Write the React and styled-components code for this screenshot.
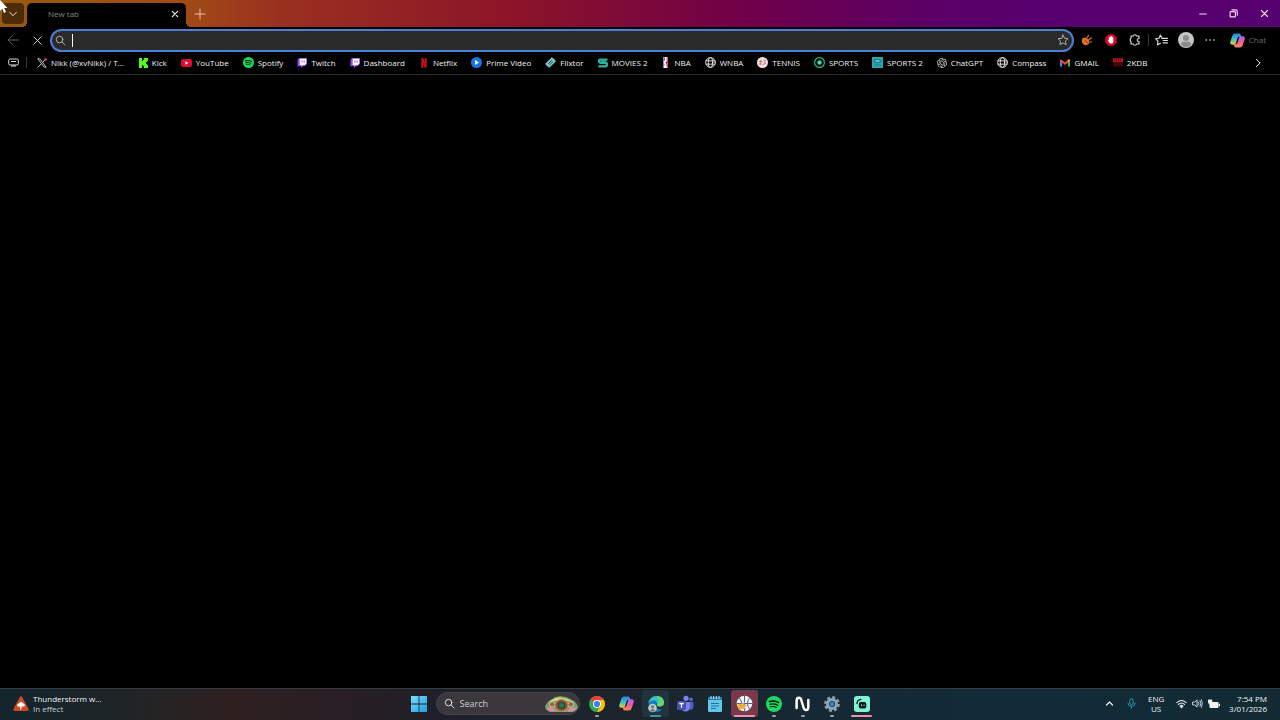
import styled, { createGlobalStyle, css } from "styled-components"
import { SiNetflix, SiOpenai } from "react-icons/si"

const GlobalStyle = createGlobalStyle`
  * { box-sizing: border-box; }
  body {
    margin: 0;
    background: #000;
    color: #e6e6e6;
    font-family: "Open Sans", "Noto Sans", sans-serif;
    font-size: 8px;
    line-height: 10px;
  }
  button {
    border: 0;
    padding: 0;
    background: none;
    color: inherit;
    font: inherit;
  }
  svg { display: block; flex: none; }
`

const Desktop = styled.div`
  display: flex;
  flex-direction: column;
  min-height: 100vh;
`

/* title bar */

const TitleBar = styled.header`
  display: flex;
  height: 27px;
  padding: 3px 0 0 2px;
  background: linear-gradient(90deg, #985a0c 0%, #a04c14 14%, #9a3020 22%, #8c1428 40%, #700048 58%, #5c0066 72%, #560070 84%);
`

const TabSearch = styled.button`
  display: grid;
  place-items: center;
  width: 22px;
  height: 21px;
  border-radius: 4px;
  background: #4c2c06;
  color: #f0e4d8;
`

const Tab = styled.div`
  position: relative;
  display: flex;
  align-items: center;
  justify-content: space-between;
  width: 159px;
  margin-left: 3px;
  padding: 0 4px 3px 21px;
  border-radius: 5px 5px 0 0;
  background: #000;
  color: #858585;

  &::before,
  &::after {
    content: "";
    position: absolute;
    bottom: 0;
    width: 5px;
    height: 5px;
  }
  &::before {
    right: 100%;
    background: radial-gradient(circle at 0 0, transparent 5px, #000 5px);
  }
  &::after {
    left: 100%;
    background: radial-gradient(circle at 100% 0, transparent 5px, #000 5px);
  }
`

const SmallButton = styled.button`
  display: grid;
  place-items: center;
  width: 14px;
  height: 14px;
  color: #f0f0f0;
`

const NewTab = styled.button`
  display: grid;
  place-items: center;
  width: 20px;
  height: 21px;
  margin-left: 4px;
  color: #f0bfae;
`

const WindowControls = styled.div`
  display: flex;
  margin-left: auto;
`

const WindowButton = styled.button`
  display: grid;
  place-items: center;
  width: 31px;
  height: 21px;
  color: #f4d8fa;
`

const Pointer = styled.svg`
  position: absolute;
  top: 0;
  left: 0;
  z-index: 2;
`

/* toolbar */

const Toolbar = styled.div`
  display: flex;
  align-items: center;
  height: 26px;
  padding-left: 1px;
`

const ToolButton = styled.button`
  display: grid;
  place-items: center;
  width: 24px;
  height: 24px;
  color: ${p => (p.$dim ? "#5c5c5c" : "#e0e0e0")};
`

const AddressBar = styled.label`
  display: flex;
  flex: 1;
  align-items: center;
  height: 23px;
  margin: 0 1px;
  padding: 0 3px;
  border: 2px solid #4a7fd4;
  border-radius: 12px;
  background: #2a2a2a;
  color: #b8b8b8;
`

const Caret = styled.span`
  width: 1px;
  height: 13px;
  margin-left: 6px;
  background: #fff;
`

const AddressInput = styled.input`
  flex: 1;
  min-width: 0;
  border: 0;
  outline: 0;
  background: none;
  color: #fff;
  font: inherit;
  caret-color: transparent;
`

const Divider = styled.span`
  width: 1px;
  height: ${p => p.$height}px;
  margin: 0 1px;
  background: #3a3a3a;
`

const ChatButton = styled.button`
  display: flex;
  align-items: center;
  gap: 4px;
  padding: 0 14px 0 8px;
  color: #6c6c6c;
`

/* bookmarks */

const Bookmarks = styled.nav`
  display: flex;
  align-items: center;
  height: 22px;
  padding: 0 15px 2px 1px;
  border-bottom: 1px solid #2b2b2b;
`

const BookmarkList = styled.ul`
  display: flex;
  flex: 1;
  align-items: center;
  gap: 14px;
  margin: 0;
  padding: 0 0 0 9px;
  list-style: none;
`

const Bookmark = styled.a`
  display: flex;
  align-items: center;
  gap: 4px;
  height: 12px;
  color: #f0f0f0;
  font-weight: 500;
  text-decoration: none;
  white-space: nowrap;
`

const Page = styled.main`
  flex: 1;
  background: #000;
`

/* taskbar */

const Taskbar = styled.footer`
  display: grid;
  grid-template-columns: 1fr auto 1fr;
  align-items: center;
  height: 32px;
  padding-bottom: 2px;
  border-top: 1px solid #343d41;
  background: linear-gradient(90deg, #13252d 0%, #1e2426 9%, #2f2020 18%, #281e24 27%, #1f2029 34%, #1c242c 50%, #152833 62%, #122b38 80%, #132a33 100%);
`

const Weather = styled.button`
  display: flex;
  align-items: center;
  gap: 4px;
  padding-left: 13px;
  color: #eef2f3;
  text-align: left;
`

const Muted = styled.span`
  display: block;
  color: #c4cccf;
`

const Tasks = styled.div`
  display: flex;
  align-items: center;
  gap: 3px;
  padding-left: 2px;
`

const SearchBox = styled.label`
  display: flex;
  align-items: center;
  width: 144px;
  height: 23px;
  padding: 0 0 0 7px;
  border: 1px solid #46444a;
  border-radius: 12px;
  background: #3a383d;
  color: #e2e2e2;
`

const SearchInput = styled.input`
  flex: 1;
  min-width: 0;
  padding: 0 0 0 5px;
  border: 0;
  outline: 0;
  background: none;
  color: #fff;
  font: inherit;
  font-size: 9px;
  &::placeholder { color: #cfcfcf; opacity: 1; }
`

const Apps = styled.div`
  display: grid;
  grid-template-columns: repeat(10, 1fr);
  justify-items: center;
  width: 294px;
`

const marks = {
  dot: css`width: 4px; background: #9aa3a8;`,
  short: css`width: 11px; background: #3f8fa3;`,
  long: css`width: 21px; background: #ef8fa8;`,
}

const AppButton = styled.button`
  position: relative;
  display: grid;
  place-items: center;
  width: 27px;
  height: 27px;
  border-radius: 3px;
  background: ${p => p.$bg || "none"};

  ${p => p.$mark && css`
    &::after {
      content: "";
      position: absolute;
      bottom: 0;
      height: 2px;
      border-radius: 1px;
      ${marks[p.$mark]}
    }
  `}
`

const Tray = styled.div`
  display: flex;
  align-items: center;
  justify-content: flex-end;
  padding-right: 13px;
  color: #eef2f3;
`

const TrayButton = styled.button`
  display: flex;
  align-items: center;
  justify-content: center;
  gap: 5px;
  min-width: 22px;
  height: 26px;
`

const Language = styled(TrayButton)`
  width: 28px;
  margin-right: 6px;
  text-align: center;
`

const Clock = styled(TrayButton)`
  margin-left: 9px;
  justify-content: flex-end;
  text-align: right;
`

/* icons */

const Line = ({ d, size = 12, w = 1, children, ...rest }) => (
  <svg width={size} height={size} viewBox="0 0 12 12" fill="none" stroke="currentColor" strokeWidth={w} strokeLinecap="round" strokeLinejoin="round" aria-hidden="true" {...rest}>
    {d && <path d={d} />}
    {children}
  </svg>
)

const star = "M6 1l1.5 3.3 3.5.4-2.6 2.4.7 3.6L6 8.9l-3.1 1.8.7-3.6L1 4.7l3.5-.4z"

const Search = ({ size }) => (
  <Line size={size}><circle cx="5" cy="5" r="3.6" /><path d="M7.7 7.7L11 11" /></Line>
)

const Spotify = ({ size }) => (
  <svg width={size} height={size} viewBox="0 0 16 16" fill="none" stroke="#06170b" strokeLinecap="round">
    <circle cx="8" cy="8" r="8" fill="#1ed760" stroke="none" />
    <path d="M3.6 5.6c3-.9 6.3-.6 8.9.9" strokeWidth="1.6" />
    <path d="M4.1 8.3c2.6-.7 5.2-.4 7.5.9" strokeWidth="1.3" />
    <path d="M4.6 10.8c2.2-.5 4.2-.2 6 .8" strokeWidth="1.1" />
  </svg>
)

const XLogo = () => (
  <svg width="10" height="10" viewBox="0 0 10 10" fill="none" stroke="#c4c4c4">
    <path d="M.8.8h2l6.400 8.400h-2z" />
    <path d="M9 .6L5.700 4.300M4.300 5.700L.8 9.400" />
    <circle cx="8.600" cy="1.600" r="1.400" fill="#d8345c" stroke="none" />
  </svg>
)

const Kick = () => (
  <svg width="10" height="10" viewBox="0 0 10 10" fill="#53fc18">
    <path d="M1 0h3v3h1V2h1V0h4v3H9v1H8v2h1v1h1v3H6V8H5V7H4v3H1z" />
  </svg>
)

const Youtube = () => (
  <svg width="11" height="10" viewBox="0 0 11 10">
    <rect y="1" width="11" height="8" rx="2" fill="#e3092f" />
    <path d="M4.3 3.2v3.6L7.5 5z" fill="#fff" />
  </svg>
)

const Twitch = () => (
  <svg width="10" height="10" viewBox="0 0 10 10">
    <path d="M2 0h8v6L7.5 8.3H5.8L4 10V8.3H.5V2z" fill="#9146ff" />
    <path d="M2.700.8h6.500v4.800L7.800 7H6L4.600 8.200V7H2.700z" fill="#fff" />
    <path d="M5 2.600v2M7.200 2.600v2" stroke="#9146ff" />
  </svg>
)

const Prime = () => (
  <svg width="11" height="11" viewBox="0 0 11 11">
    <circle cx="5.5" cy="5.5" r="5.5" fill="#1876e0" />
    <path d="M4 3v5l4-2.500z" fill="#fff" />
  </svg>
)

const Flixtor = () => (
  <svg width="11" height="11" viewBox="0 0 11 11">
    <path d="M0 7L6.800.3l1.400 1.200 1.100.1.200 1.200L11 4.200 4.300 10.700 3 9.600 1.700 9.400 1.500 8.200z" fill="#7fc4c4" />
    <path d="M3.200 6.800l3.600-3.500M4.500 8l3.600-3.500" stroke="#16494f" />
  </svg>
)

const Movies = () => (
  <svg width="10" height="10" viewBox="0 0 10 10" fill="none">
    <path d="M9.5 1.600H2.500Q1 1.600 1 3t1.500 1.700h5Q9 4.800 9 6.500T7.500 8.400H.5" stroke="#2bb3a3" strokeWidth="2.400" />
    <path d="M3 3.200h5" stroke="#8be0d4" strokeWidth=".6" />
  </svg>
)

const Nba = () => (
  <svg width="9" height="11" viewBox="0 0 9 11">
    <rect x="2" width="5" height="11" rx="1.2" fill="#fff" />
    <path d="M2.300 1.200Q2.500.3 4 .3L3.800 3 2.700 5l.8 2.500-.8 3-.4-.5z" fill="#2f58b5" />
    <path d="M5.500.3q1.300 0 1.300 1V10q0 .6-1 .6L5.300 7l-.8-1.500L5.800 4z" fill="#d3203f" />
  </svg>
)

const Globe = () => (
  <Line size={11}><circle cx="6" cy="6" r="5.3" /><ellipse cx="6" cy="6" rx="2.4" ry="5.3" /><path d="M1.200 4.200h9.600M1.200 7.800h9.600" /></Line>
)

const Tennis = () => (
  <svg width="11" height="11" viewBox="0 0 11 11" fill="none">
    <circle cx="5.5" cy="5.5" r="5.5" fill="#f2e4e2" />
    <path d="M2 4.500h3.500M6.500 3.200H9M2 7h2.500M5.500 7.500L9 6.500M4 2.500l-.5 5M7 5.200h2" stroke="#b66a68" strokeWidth=".9" />
  </svg>
)

const Sports = () => (
  <svg width="11" height="11" viewBox="0 0 11 11" fill="none" stroke="#20b98c">
    <circle cx="5.5" cy="5.5" r="4.9" strokeWidth="1.2" />
    <circle cx="5.5" cy="5.5" r="2.3" fill="#3fe0b0" stroke="#0b5c47" />
  </svg>
)

const Sports2 = () => (
  <svg width="11" height="11" viewBox="0 0 11 11" fill="none">
    <rect width="11" height="11" fill="#2aa5ab" />
    <path d="M2.500 2.500h6v3h-6zM2 8.500q3.500-2 7 0" stroke="#17808a" />
    <path d="M4 4h3" stroke="#8fe0e0" />
  </svg>
)

const Gmail = () => (
  <svg width="10" height="10" viewBox="0 0 10 10">
    <path d="M0 2v6.500h2.200V4z" fill="#4285f4" />
    <path d="M10 2v6.500H7.800V4z" fill="#34a853" />
    <path d="M0 2q.5-1 1.700-.3L5 4.200l3.300-2.500Q9.500 1 10 2v1.200L5 7 0 3.200z" fill="#ea4335" />
    <path d="M7.800 2l.8-.4Q10 1.300 10 2.800L7.800 4.700z" fill="#fbbc04" />
  </svg>
)

const Kdb = () => (
  <svg width="10" height="9" viewBox="0 0 11 9">
    <rect width="11" height="9" fill="#3a0809" />
    <path d="M0 0h11v4H0z" fill="#c3161c" />
    <path d="M2 1v2M4 1v2M6 1v2M8 1v2M1 6h9" stroke="#5c0c10" />
  </svg>
)

const Copilot = ({ size }) => (
  <svg width={size} height={size} viewBox="0 0 16 16">
    <defs>
      <linearGradient id="cpA" x1="0" y1="0" x2="0" y2="1">
        <stop offset="0" stopColor="#2f7df0" /><stop offset=".5" stopColor="#35c3c0" /><stop offset="1" stopColor="#f0c93a" />
      </linearGradient>
      <linearGradient id="cpB" x1="0" y1="0" x2="0" y2="1">
        <stop offset="0" stopColor="#a667f2" /><stop offset=".5" stopColor="#ee5aa0" /><stop offset="1" stopColor="#f98b4c" />
      </linearGradient>
    </defs>
    <path d="M5.500.5h4q1.500 0 2 1.500l.6 2H10Q8.500 4 8 5.500l-1.600 5.500Q5.900 12.500 4.500 12.500h-2Q-.4 12.500.3 9.500L2.500 3Q3.300.5 5.500.5z" fill="url(#cpA)" />
    <path d="M10.500 15.500h-4q-1.500 0-2-1.500l-.6-2H6q1.500 0 2-1.500L9.600 5Q10.100 3.500 11.500 3.500h2q2.900 0 2.200 3L13.500 13q-.8 2.500-3 2.500z" fill="url(#cpB)" />
  </svg>
)

const Collections = () => (
  <svg width="11" height="9" viewBox="0 0 11 9" fill="none" stroke="#e0e0e0">
    <rect x=".7" y="1" width="9.6" height="6" rx="1.5" />
    <path d="M3 3.500h5M3 8h5" />
  </svg>
)

const PlugIcon = () => (
  <svg width="12" height="12" viewBox="0 0 12 12" fill="none" stroke="#ea7028" strokeLinecap="round">
    <path d="M2 4.500Q4 3 6.500 5.200T7.500 9.700Q4.500 12 2.300 9.700T2 4.500z" fill="#ea7028" />
    <path d="M5.800 4L7.500 1.500M7.500 6L10.500 3.800M9 8h1.500" strokeWidth="1.2" />
    <path d="M4 6.500l2.500 2.300" stroke="#7a3208" />
  </svg>
)

const Blocker = () => (
  <svg width="12" height="12" viewBox="0 0 12 12">
    <path d="M3.600.3h4.800l3.300 3.300v4.800l-3.300 3.300H3.600L.3 8.400V3.600z" fill="#d9062c" />
    <path d="M3.800 6V3.500h.9V2.600h1v-.5h1v.7h1v.8h.7V7.500Q8.200 9.800 6 9.800 4.600 9.800 3 6.700z" fill="#fff" />
  </svg>
)

const Avatar = () => (
  <svg width="16" height="16" viewBox="0 0 16 16">
    <circle cx="8" cy="8" r="8" fill="#c6c6c6" />
    <circle cx="8" cy="6" r="3" fill="#8b8b8b" />
    <path d="M2.800 12.500Q3 9.700 5.500 9.700h5q2.500 0 2.700 2.800Q11 15 8 15t-5.200-2.500z" fill="#8b8b8b" />
  </svg>
)

const StormIcon = () => (
  <svg width="16" height="16" viewBox="0 0 16 16">
    <path d="M6.800 1.200q1.200-1.800 2.400 0l6.300 11.500q.8 2-1.200 2.300H1.700q-2-.3-1.200-2.300z" fill="#cc4a24" />
    <path d="M4.500 10.500q-1-2.700 1.700-3.200Q8 4.800 10 7.300q2.500.7 1.500 3.200z" fill="#fff" />
    <path d="M8.500 8.500L6.800 11h1.500l-.8 2.500" fill="none" stroke="#fff" />
  </svg>
)

const Windows = () => (
  <svg width="16" height="16" viewBox="0 0 16 16">
    <defs>
      <linearGradient id="win" x1="0" y1="0" x2="1" y2="1">
        <stop stopColor="#7fdcfb" /><stop offset="1" stopColor="#1b9fe4" />
      </linearGradient>
    </defs>
    <path d="M0 0h7.600v7.600H0zM8.400 0H16v7.600H8.400zM0 8.400h7.600V16H0zM8.400 8.400H16V16H8.400z" fill="url(#win)" />
  </svg>
)

const Highlight = () => (
  <svg width="35" height="18" viewBox="0 0 36 20" preserveAspectRatio="none">
    <path d="M1 13Q3 7 8 5q4-4 10-3.500T28 5q5 2 7 8-1 5-6 6H7q-5-1-6-6z" fill="#7fa06c" />
    <path d="M5 8q6-6 13-5t13 5q-5-2-13-2T5 8z" fill="#c8d98c" />
    <path d="M3 15q5-3 9 3H7q-3-1-4-3zM33 15q-5-3-9 3h5q3-1 4-3z" fill="#e889b4" />
    <circle cx="8.500" cy="10.500" r="3" fill="#8a6a4e" stroke="#d8c8a0" />
    <circle cx="27.500" cy="10.500" r="3" fill="#8a6a4e" stroke="#d8c8a0" />
    <circle cx="18" cy="11.500" r="6.500" fill="#8f4a30" stroke="#cf8a58" />
    <circle cx="18" cy="11.500" r="3.300" fill="#237a5c" stroke="#123c30" />
  </svg>
)

const Chrome = () => (
  <svg width="16" height="16" viewBox="0 0 16 16">
    <circle cx="8" cy="8" r="8" fill="#34a853" />
    <path d="M8 8L1.100 4A8 8 0 0 1 14.900 4H8z" fill="#ea4335" />
    <path d="M8 4h6.900A8 8 0 0 1 8 16l3.500-6z" fill="#fbbc04" />
    <circle cx="8" cy="8" r="4" fill="#fff" />
    <circle cx="8" cy="8" r="3.1" fill="#3b7fee" />
  </svg>
)

const Edge = () => (
  <svg width="18" height="18" viewBox="0 0 18 18">
    <path d="M1.500 9A7.700 7.700 0 0 1 9.500 1Q16 1 17 7q.3 4-4 4.500-3 0-3.500-1.500 1-3-2-4T1.500 9z" fill="#38c4b8" />
    <path d="M9.500 1Q16 1 17 7q.3 4-4 4.500-2.500 0-3.300-1.200Q15 6 9.500 1z" fill="#66d96c" />
    <path d="M1.500 9q2-4 6-3.500Q10 6 9.700 8.500 7.500 11 10 13.500q3 1.500 5.500.5Q13 17 9 17 2 16 1.500 9z" fill="#1677cb" />
    <circle cx="5.500" cy="13" r="4.300" fill="#bfc7ca" />
    <circle cx="5.500" cy="11.800" r="1.600" fill="#69757b" />
    <path d="M2.800 15.500q2.700-3.200 5.400 0-2.700 2.400-5.400 0z" fill="#69757b" />
  </svg>
)

const Teams = () => (
  <svg width="17" height="17" viewBox="0 0 17 17">
    <circle cx="9" cy="3.300" r="2.600" fill="#7b83eb" />
    <circle cx="14" cy="4.300" r="1.900" fill="#5b62c9" />
    <path d="M11 7h5.500v5q-.5 3-3.500 3z" fill="#5059c9" />
    <path d="M5 7h8v5.500q-.5 4-4.500 4T5 12.500z" fill="#7b83eb" />
    <rect y="6" width="9" height="9" rx="1.500" fill="#4450b8" />
    <path d="M2.300 8.500h4.400M4.500 8.500v4.300" stroke="#fff" strokeWidth="1.300" />
  </svg>
)

const Notepad = () => (
  <svg width="14" height="16" viewBox="0 0 14 16">
    <rect y="1" width="14" height="15" rx="1.500" fill="#62c7e8" />
    <path d="M0 2.500Q0 1 1.500 1h11Q14 1 14 2.500V4H0z" fill="#1d7fa8" />
    <path d="M3 0v3M5.700 0v3M8.300 0v3M11 0v3" stroke="#bceaf7" />
    <path d="M3 7.500h8M3 10h8M3 12.500h5" stroke="#20708f" />
  </svg>
)

const BallApp = () => (
  <svg width="17" height="17" viewBox="0 0 17 17" fill="none">
    <circle cx="8.500" cy="8.500" r="7.800" fill="#f2f3f6" />
    <path d="M8.500.7v15.600M.7 8.500h15.600M3.300 2.800q4.500 5.700 0 11.400M13.700 2.800q-4.500 5.700 0 11.400" stroke="#4a62a5" />
    <path d="M1 9.500l5-1 3-2-1 3 3 .5-2 2 1 2.500-4-1-3 2-.5-3z" fill="#efad3d" />
  </svg>
)

const NApp = () => (
  <svg width="15" height="16" viewBox="0 0 15 16" fill="none" stroke="#fff" strokeWidth="2.500" strokeLinecap="round">
    <path d="M1.600 12V5q0-3.200 2.300-3.200 1.700 0 2.400 2.200l2.200 7.500q.7 2.500 2.500 2.500 2.300 0 2.300-3V4" />
  </svg>
)

const Gear = () => (
  <svg width="16" height="16" viewBox="0 0 16 16">
    <circle cx="8" cy="8" r="6.600" fill="none" stroke="#8d9baa" strokeWidth="2.600" strokeDasharray="3.100 2.080" />
    <circle cx="8" cy="8" r="4.500" fill="#27323c" stroke="#93a2b2" strokeWidth="3" />
    <circle cx="8" cy="8" r="2.300" fill="#2c86c9" />
  </svg>
)

const Streamlabs = () => (
  <svg width="16" height="16" viewBox="0 0 16 16" fill="none">
    <rect width="16" height="16" rx="3" fill="#80f5d2" />
    <rect x="4.800" y="6" width="7.500" height="6.500" rx="2" fill="#09161d" />
    <path d="M3 7.500q0-3.700 4-4.200" stroke="#09161d" strokeWidth="1.300" strokeLinecap="round" />
    <path d="M7.500 8.500V10M10 8.500V10" stroke="#80f5d2" />
  </svg>
)

const bookmarks = [
  ["Nikk (@xvNikk) / T...", <XLogo />],
  ["Kick", <Kick />],
  ["YouTube", <Youtube />],
  ["Spotify", <Spotify size={11} />],
  ["Twitch", <Twitch />],
  ["Dashboard", <Twitch />],
  ["Netflix", <SiNetflix size={10} color="#c9101d" />],
  ["Prime Video", <Prime />],
  ["Flixtor", <Flixtor />],
  ["MOVIES 2", <Movies />],
  ["NBA", <Nba />],
  ["WNBA", <Globe />],
  ["TENNIS", <Tennis />],
  ["SPORTS", <Sports />],
  ["SPORTS 2", <Sports2 />],
  ["ChatGPT", <SiOpenai size={10} color="#d0d0d0" />],
  ["Compass", <Globe />],
  ["GMAIL", <Gmail />],
  ["2KDB", <Kdb />],
]

const apps = [
  { name: "Chrome", icon: <Chrome />, mark: "dot" },
  { name: "Copilot", icon: <Copilot size={15} /> },
  { name: "Edge", icon: <Edge />, mark: "short", bg: "#22333d" },
  { name: "Teams", icon: <Teams /> },
  { name: "Notepad", icon: <Notepad /> },
  { name: "Basketball", icon: <BallApp />, mark: "long", bg: "#783a49" },
  { name: "Spotify", icon: <Spotify size={16} />, mark: "dot" },
  { name: "N", icon: <NApp />, mark: "dot" },
  { name: "Settings", icon: <Gear />, mark: "dot" },
  { name: "Streamlabs", icon: <Streamlabs />, mark: "long" },
]

export default function App() {
  return (
    <Desktop>
      <GlobalStyle />
      <Pointer width="9" height="14" viewBox="0 0 9 14" aria-hidden="true">
        <path d="M0 0v11l2.300-2.200L4 13l2-.9-1.700-4h3.200z" fill="#fff" />
      </Pointer>

      <TitleBar>
        <TabSearch aria-label="Search tabs"><Line size={10} d="M2 4l4 4 4-4" w={1.2} /></TabSearch>
        <Tab>
          <span>New tab</span>
          <SmallButton aria-label="Close tab"><Line size={8} d="M2 2l8 8M10 2l-8 8" w={1.8} /></SmallButton>
        </Tab>
        <NewTab aria-label="New tab"><Line size={12} d="M6 1v10M1 6h10" /></NewTab>
        <WindowControls>
          <WindowButton aria-label="Minimize"><Line size={8} d="M1 6h10" w={1.5} /></WindowButton>
          <WindowButton aria-label="Restore">
            <Line size={9} w={1.5}><rect x="1.500" y="3.500" width="7" height="7" rx="1" /><path d="M4 1.200h5q2 0 2 2v5" /></Line>
          </WindowButton>
          <WindowButton aria-label="Close"><Line size={9} d="M2 2l8 8M10 2l-8 8" w={1.5} /></WindowButton>
        </WindowControls>
      </TitleBar>

      <Toolbar>
        <ToolButton $dim aria-label="Back"><Line d="M11.500 6H1M5.500 1.500L1 6l4.500 4.500" /></ToolButton>
        <ToolButton aria-label="Stop"><Line size={11} d="M2 2l8 8M10 2l-8 8" /></ToolButton>
        <AddressBar>
          <Search size={11} />
          <Caret />
          <AddressInput aria-label="Address" />
          <Line size={12} d={star} w={0.9} />
        </AddressBar>
        <ToolButton aria-label="Plug extension"><PlugIcon /></ToolButton>
        <ToolButton aria-label="Ad blocker"><Blocker /></ToolButton>
        <ToolButton aria-label="Extensions">
          <Line w={1.1} d="M2 2h2.500q.2-1.300 1.500-1.300T7.500 2H10v2.500q-1.800.2-1.800 1.500T10 7.500V10H7.500q-.2 1.300-1.500 1.300T4.500 10H2V7.700Q1.200 7.300 1.200 6T2 4.300z" />
        </ToolButton>
        <Divider $height={12} />
        <ToolButton aria-label="Favorites">
          <Line size={13} d="M9.500 4H6.400L5 1 3.600 4l-3 .4 2.200 2.100L2.200 10 5 8.500M7.500 6h4M7.500 8.200h4M8 4h3.500" />
        </ToolButton>
        <ToolButton aria-label="Profile"><Avatar /></ToolButton>
        <ToolButton aria-label="More"><Line size={10} d="M1.500 6h.1M6 6h.1M10.500 6h.1" w={2} /></ToolButton>
        <ChatButton><Copilot size={15} />Chat</ChatButton>
      </Toolbar>

      <Bookmarks aria-label="Favorites bar">
        <ToolButton aria-label="Workspaces"><Collections /></ToolButton>
        <Divider $height={11} />
        <BookmarkList>
          {bookmarks.map(([name, icon]) => (
            <li key={name}><Bookmark href="#">{icon}{name}</Bookmark></li>
          ))}
        </BookmarkList>
        <SmallButton aria-label="More favorites"><Line size={10} d="M4 1.500L8.500 6 4 10.500" w={1.2} /></SmallButton>
      </Bookmarks>

      <Page />

      <Taskbar>
        <Weather>
          <StormIcon />
          <span>Thunderstorm w...<Muted>In effect</Muted></span>
        </Weather>
        <Tasks>
          <AppButton aria-label="Start"><Windows /></AppButton>
          <SearchBox>
            <Search size={11} />
            <SearchInput aria-label="Search" placeholder="Search" />
            <Highlight />
          </SearchBox>
          <Apps>
            {apps.map(a => (
              <AppButton key={a.name} aria-label={a.name} $mark={a.mark} $bg={a.bg}>{a.icon}</AppButton>
            ))}
          </Apps>
        </Tasks>
        <Tray>
          <TrayButton aria-label="Hidden icons"><Line size={9} d="M2 8l4-4 4 4" w={1.6} /></TrayButton>
          <TrayButton aria-label="Microphone">
            <Line size={11} stroke="#25a1a8"><rect x="4.200" y=".8" width="3.600" height="6.400" rx="1.800" /><path d="M2 5.500q0 3.700 4 3.700t4-3.700M6 9.200v2" /></Line>
          </TrayButton>
          <Language>ENG<br />US</Language>
          <TrayButton aria-label="Network, volume, battery">
            <Line size={11} w={1.2}><path d="M1 5q5-4.500 10 0M2.700 7Q6 4 9.300 7M4.400 8.800q1.600-1.400 3.200 0" /><circle cx="6" cy="10" r=".6" /></Line>
            <Line size={11} d="M1 4.500h2L5.500 2v8L3 7.500H1zM7.200 4.500q1 1.500 0 3M8.800 3q2 3 0 6M10.300 1.800q2.200 4.200 0 8.400" w={0.9} />
            <svg width="12" height="10" viewBox="0 0 12 10">
              <rect x="1.500" y="3" width="9" height="6" rx="1" fill="#eef2f3" />
              <path d="M11 5v2h1V5zM0 1h4v2.500L2 5.500l-2-2zM1 0v1M3 0v1" fill="#eef2f3" stroke="#eef2f3" strokeWidth=".5" />
            </svg>
          </TrayButton>
          <Clock>7:54 PM<br />3/01/2026</Clock>
        </Tray>
      </Taskbar>
    </Desktop>
  )
}
